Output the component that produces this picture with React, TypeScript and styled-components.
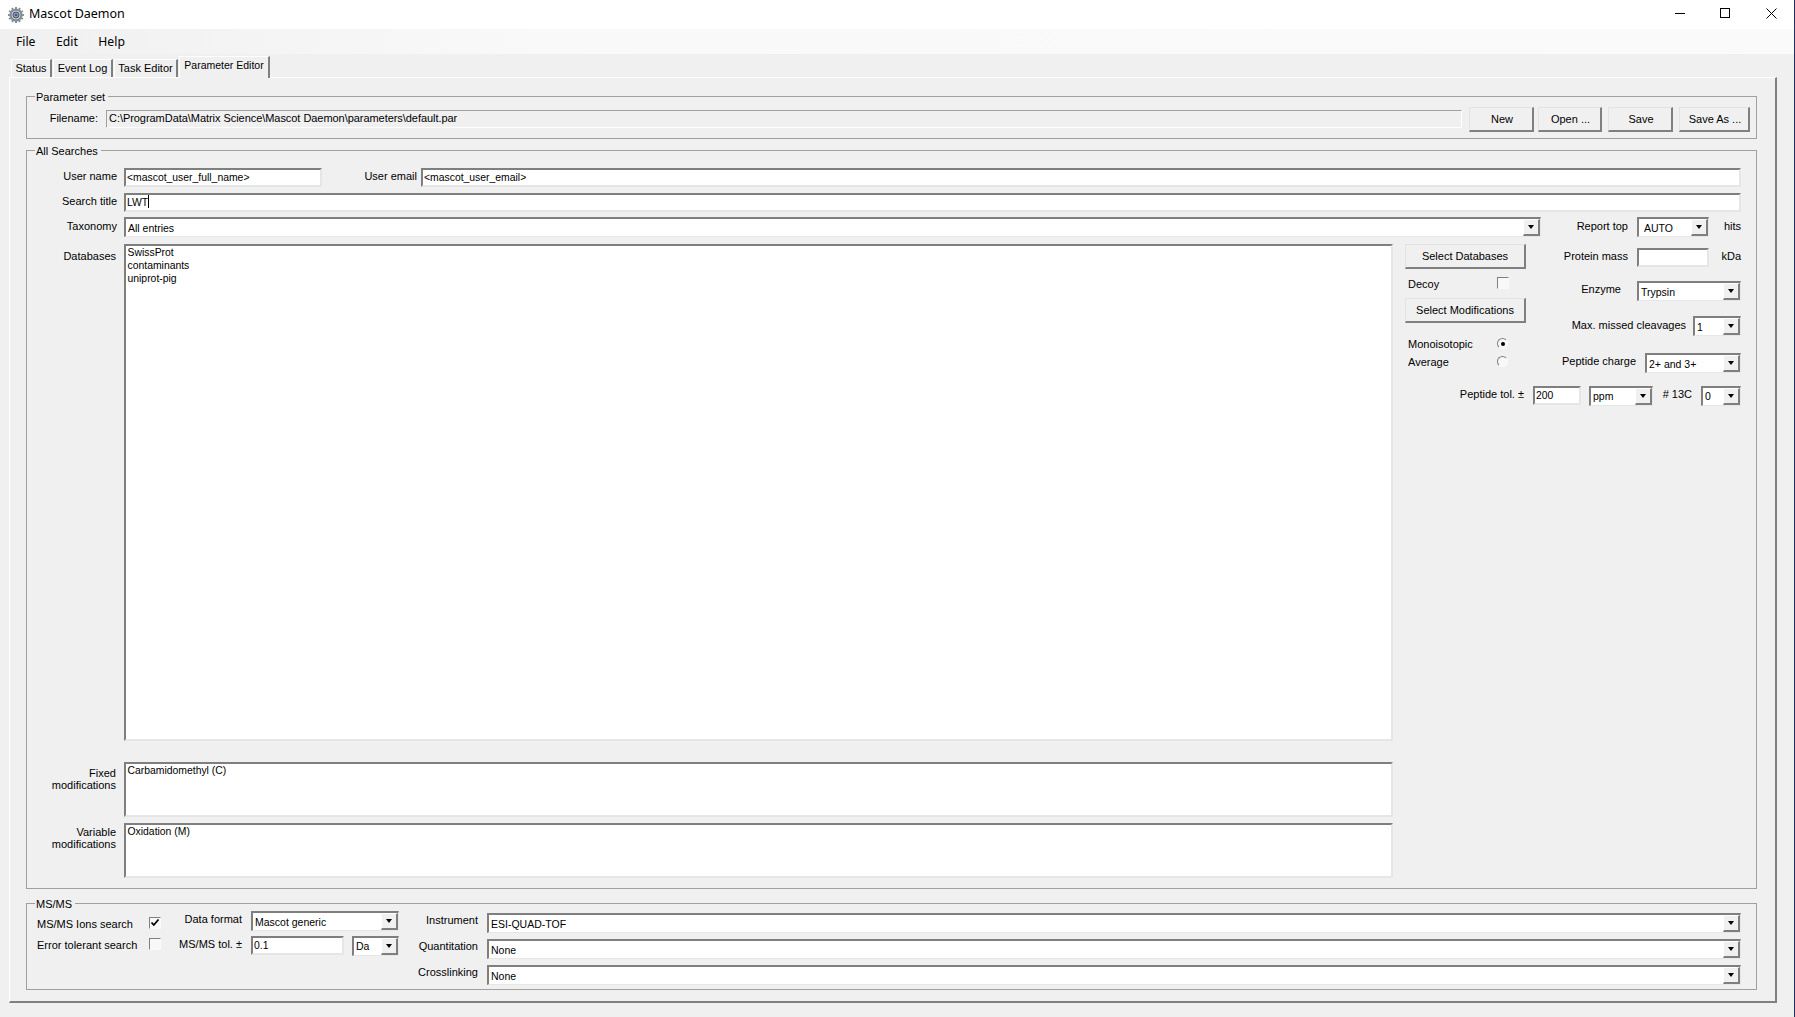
import React from "react";
import styled, { createGlobalStyle, css } from "styled-components";

const Global = createGlobalStyle`
  html, body { margin: 0; padding: 0; background: #f0f0f0; }
  body { font-family: "Liberation Sans", Arial, sans-serif; font-size: 11px; color: #000; }
  * { box-sizing: border-box; }
`;

const sunken = css`
  background: #fff;
  border-style: solid;
  border-width: 2px;
  border-color: #7f7f7f #e6e6e6 #e6e6e6 #7f7f7f;
`;

const Page = styled.div`
  width: 1795px;
  height: 1017px;
  display: flex;
  flex-direction: column;
  background: #f0f0f0;
  border-right: 1px solid #1d3160;
  overflow: hidden;
`;

const TitleBar = styled.header`
  height: 29px;
  flex: none;
  background: #fff;
  display: flex;
  align-items: center;
  padding-left: 8px;
  font-family: "Noto Sans", sans-serif;
  font-size: 12.5px;
`;
const AppName = styled.span`
  margin-left: 5px;
  flex: 1;
  padding-bottom: 2px;
`;
const WinControls = styled.div`
  display: flex;
  align-items: center;
  width: 122px;
  column-gap: 34px;
  padding: 0 0 2px 3px;
  svg:last-child { margin-left: 1px; }
`;
const MenuBar = styled.nav`
  height: 25px;
  flex: none;
  display: flex;
  align-items: center;
  gap: 20.5px;
  padding-left: 16px;
  font-family: "Noto Sans", sans-serif;
  font-size: 12.2px;
  background: linear-gradient(90deg, #f0f0f0 0%, #f9f9f9 30%, #fafafa 100%);
`;
const TabStrip = styled.div`
  height: 23px;
  flex: none;
  display: flex;
  align-items: flex-end;
  padding-left: 11px;
  gap: 1px;
  position: relative;
  z-index: 1;
`;
const Tab = styled.div<{ $w: number; $active?: boolean }>`
  width: ${(p) => p.$w}px;
  height: ${(p) => (p.$active ? 22 : 18)}px;
  display: flex;
  align-items: center;
  justify-content: center;
  background: #f0f0f0;
  border-style: solid;
  border-width: 1px 2px 0 1px;
  border-color: #fff #808080 #f0f0f0 #fff;
  margin-bottom: ${(p) => (p.$active ? -1 : 0)}px;
  padding-bottom: ${(p) => (p.$active ? 6 : 2)}px;
  font-size: ${(p) => (p.$active ? 10.5 : 11)}px;
`;
const Panel = styled.main`
  width: 1768px;
  height: 926px;
  margin-left: 9px;
  flex: none;
  border-style: solid;
  border-width: 1px 2px 2px 1px;
  border-color: #fff #808080 #808080 #fff;
  padding: 18px 18px 0 16px;
`;
const Group = styled.section<{ $mt?: number; $pt: number; $pb: number }>`
  position: relative;
  margin-top: ${(p) => p.$mt ?? 0}px;
  border: 1px solid #a0a0a0;
  padding-top: ${(p) => p.$pt}px;
  padding-bottom: ${(p) => p.$pb}px;
`;
const Legend = styled.span`
  position: absolute;
  left: 8px;
  top: -6px;
  background: #f0f0f0;
  padding: 0 3px 0 1px;
  line-height: 13px;
`;
const Row = styled.div<{ $mt?: number; $h: number; $end?: boolean; $pr?: number }>`
  display: flex;
  align-items: center;
  height: ${(p) => p.$h}px;
  margin-top: ${(p) => p.$mt ?? 0}px;
  padding-right: ${(p) => p.$pr ?? 0}px;
  justify-content: ${(p) => (p.$end ? "flex-end" : "flex-start")};
`;
const Label = styled.label<{ $w?: number; $gap?: number; $up?: number }>`
  flex: none;
  ${(p) => (p.$w ? `width: ${p.$w}px;` : "")}
  margin-right: ${(p) => p.$gap ?? 0}px;
  padding-bottom: ${(p) => p.$up ?? 2}px;
  text-align: right;
  white-space: nowrap;
  line-height: 13px;
`;
const ReadOnlyPath = styled.div`
  flex: 1;
  height: 18px;
  background: #f0f0f0;
  border: 1px solid;
  border-color: #a0a0a0 #fff #fff #a0a0a0;
  padding: 0 2px;
  line-height: 15px;
  letter-spacing: -0.05px;
`;
const Btn = styled.button<{ $w: number; $ml?: number; $mt?: number; $nudge?: number }>`
  flex: none;
  font: inherit;
  color: #000;
  width: ${(p) => p.$w}px;
  height: 25px;
  margin-left: ${(p) => p.$ml ?? 0}px;
  margin-top: ${(p) => p.$mt ?? 0}px;
  padding: 0 0 0 ${(p) => p.$nudge ?? 0}px;
  background: #f0f0f0;
  border-style: solid;
  border-width: 1px 2px 2px 1px;
  border-color: #e3e3e3 #808080 #808080 #e3e3e3;
`;
const TextBox = styled.div<{ $w?: number; $h?: number }>`
  ${sunken}
  ${(p) => (p.$w ? `width: ${p.$w}px; flex: none;` : "flex: 1;")}
  height: ${(p) => p.$h ?? 19}px;
  padding: 0 1px;
  line-height: 16px;
  font-size: 10.4px;
  white-space: nowrap;
`;
const Caret = styled.span`
  display: inline-block;
  width: 1px;
  height: 13px;
  background: #000;
  vertical-align: -2px;
`;
const SelectBox = styled.div<{ $w?: number; $ml?: number; $pl?: number }>`
  ${sunken}
  ${(p) => (p.$w ? `width: ${p.$w}px; flex: none;` : "flex: 1;")}
  margin-left: ${(p) => p.$ml ?? 0}px;
  height: 20px;
  display: flex;
  align-items: center;
  justify-content: space-between;
  padding-left: ${(p) => p.$pl ?? 2}px;
  border-right-width: 1px;
  border-bottom-width: 1px;
  font-size: 10.5px;
`;
const SelectArrow = styled.span`
  width: 17px;
  height: 17px;
  flex: none;
  display: flex;
  align-items: center;
  justify-content: center;
  background: #f0f0f0;
  border-style: solid;
  border-width: 1px 2px 2px 1px;
  border-color: #fff #7f7f7f #7f7f7f #fff;
  &::after {
    content: "";
    border-style: solid;
    border-width: 4px 3.5px 0;
    border-color: #000 transparent transparent;
  }
`;
const Select = ({ w, ml, pl, value }: { w?: number; ml?: number; pl?: number; value: string }) => (
  <SelectBox $w={w} $ml={ml} $pl={pl}>
    <span>{value}</span>
    <SelectArrow />
  </SelectBox>
);
const Body = styled.div`
  display: flex;
  margin-top: 7px;
`;
const ListColumn = styled.div`
  width: 1366px;
  flex: none;
  display: flex;
  flex-direction: column;
`;
const ListRow = styled.div<{ $h: number; $mt?: number }>`
  display: flex;
  height: ${(p) => p.$h}px;
  margin-top: ${(p) => p.$mt ?? 0}px;
`;
const ListLabel = styled.div<{ $pt: number }>`
  width: 89px;
  margin-right: 8px;
  padding-top: ${(p) => p.$pt}px;
  text-align: right;
  line-height: 12px;
  flex: none;
`;
const ListBox = styled.div`
  ${sunken}
  flex: 1;
  padding: 0 1px 0 1.5px;
  line-height: 13px;
  font-size: 10.4px;
`;
const RightSide = styled.div`
  flex: 1;
  display: flex;
  flex-direction: column;
  padding-right: 15px;
`;
const RightTop = styled.div`
  display: flex;
`;
const ButtonCol = styled.div`
  width: 133px;
  padding-left: 12px;
  flex: none;
  display: flex;
  flex-direction: column;
`;
const OptionRow = styled.div<{ $mt: number }>`
  display: flex;
  align-items: center;
  justify-content: space-between;
  height: 14px;
  margin-top: ${(p) => p.$mt}px;
  padding-left: 3px;
  width: 104px;
`;
const ParamCol = styled.div`
  flex: 1;
  display: flex;
  flex-direction: column;
`;
const Check = styled.span<{ $lift?: number }>`
  width: 12px;
  height: 12px;
  flex: none;
  display: inline-flex;
  align-items: center;
  justify-content: center;
  border: 1px solid;
  border-color: #7f7f7f #fafafa #fafafa #7f7f7f;
  background: #f8f8f8;
  margin-bottom: ${(p) => p.$lift ?? 0}px;
  svg { display: block; }
`;
const Radio = styled.span`
  width: 11px;
  height: 11px;
  flex: none;
  display: inline-flex;
  align-items: center;
  justify-content: center;
  border-radius: 50%;
  border: 1px solid;
  border-color: #7f7f7f #fafafa #fafafa #7f7f7f;
  background: #f8f8f8;
  margin: 0 1px 1px 0;
`;
const RadioDot = styled.span`
  width: 4px;
  height: 4px;
  border-radius: 50%;
  background: #000;
`;
const MsBody = styled.div`
  display: flex;
`;
const MsFlags = styled.div`
  width: 134px;
  flex: none;
  padding: 13px 0 0 10px;
`;
const FlagRow = styled.div<{ $mt?: number }>`
  display: flex;
  align-items: flex-start;
  justify-content: space-between;
  height: 14px;
  margin-top: ${(p) => p.$mt ?? 0}px;
`;
const FlagLabel = styled.span`
  padding-top: 1px;
  line-height: 13px;
  white-space: nowrap;
`;
const MsFormat = styled.div`
  width: 238px;
  flex: none;
  padding-top: 7px;
`;
const MsInstrument = styled.div`
  flex: 1;
  padding: 9px 15px 0 0;
`;

const teeth = [0, 30, 60, 90, 120, 150, 180, 210, 240, 270, 300, 330];
const GearIcon = () => (
  <svg width="16" height="16" viewBox="0 0 16 16">
    {teeth.map((a) => (
      <rect key={a} x="7" y="0" width="2" height="2.4" fill="#8a8f97" transform={`rotate(${a} 8 8)`} />
    ))}
    <circle cx="8" cy="8" r="6.6" fill="#8d939b" />
    <circle cx="8" cy="8" r="5" fill="#c9cfd6" stroke="#666e79" strokeWidth="0.8" />
    <circle cx="8" cy="8" r="3" fill="#8b99ab" stroke="#46556a" strokeWidth="1" />
    <circle cx="8" cy="8" r="1.1" fill="#2f4f7c" />
  </svg>
);
const TickIcon = () => (
  <svg width="10" height="10" viewBox="0 0 10 10">
    <path d="M1.5 4.5 L3.8 7 L8.5 1.5" fill="none" stroke="#000" strokeWidth="1.8" />
  </svg>
);
const MinIcon = () => (
  <svg width="11" height="11" viewBox="0 0 11 11"><path d="M0 5.5H10" stroke="#000" /></svg>
);
const MaxIcon = () => (
  <svg width="11" height="11" viewBox="0 0 11 11"><rect x="0.5" y="0.5" width="9" height="9" fill="none" stroke="#000" /></svg>
);
const CloseIcon = () => (
  <svg width="11" height="11" viewBox="0 0 11 11"><path d="M0.5 0.5L10.5 10.5M10.5 0.5L0.5 10.5" stroke="#000" /></svg>
);

export default function App() {
  return (
    <Page>
      <Global />
      <TitleBar>
        <GearIcon />
        <AppName>Mascot Daemon</AppName>
        <WinControls>
          <MinIcon />
          <MaxIcon />
          <CloseIcon />
        </WinControls>
      </TitleBar>
      <MenuBar>
        <span>File</span>
        <span>Edit</span>
        <span>Help</span>
      </MenuBar>
      <TabStrip>
        <Tab $w={41}>Status</Tab>
        <Tab $w={60}>Event Log</Tab>
        <Tab $w={64}>Task Editor</Tab>
        <Tab $w={91} $active>Parameter Editor</Tab>
      </TabStrip>
      <Panel>
        <Group $pt={10} $pb={7}>
          <Legend>Parameter set</Legend>
          <Row $h={24} $pr={6}>
            <Label $w={71} $gap={8}>Filename:</Label>
            <ReadOnlyPath>C:\ProgramData\Matrix Science\Mascot Daemon\parameters\default.par</ReadOnlyPath>
            <Btn $w={65} $ml={7} $nudge={2}>New</Btn>
            <Btn $w={64} $ml={4} $nudge={2}>Open ...</Btn>
            <Btn $w={65} $ml={6} $nudge={2}>Save</Btn>
            <Btn $w={71} $ml={6} $nudge={2}>Save As ...</Btn>
          </Row>
        </Group>

        <Group $mt={11} $pt={17} $pb={10}>
          <Legend>All Searches</Legend>
          <Row $h={19} $pr={15}>
            <Label $w={90} $gap={7}>User name</Label>
            <TextBox $w={198}>&lt;mascot_user_full_name&gt;</TextBox>
            <Label $w={95} $gap={4}>User email</Label>
            <TextBox>&lt;mascot_user_email&gt;</TextBox>
          </Row>
          <Row $h={19} $mt={6} $pr={15}>
            <Label $w={90} $gap={7}>Search title</Label>
            <TextBox>LWT<Caret /></TextBox>
          </Row>
          <Row $h={20} $mt={5} $pr={15}>
            <Label $w={90} $gap={7}>Taxonomy</Label>
            <Select w={1417} value="All entries" />
            <Label $w={87} $gap={9}>Report top</Label>
            <Select w={72} pl={5} value="AUTO" />
            <Label $w={32}>hits</Label>
          </Row>
          <Body>
            <ListColumn>
              <ListRow $h={497}>
                <ListLabel $pt={6}>Databases</ListLabel>
                <ListBox>SwissProt<br />contaminants<br />uniprot-pig</ListBox>
              </ListRow>
              <ListRow $h={55} $mt={21}>
                <ListLabel $pt={5}>Fixed<br />modifications</ListLabel>
                <ListBox>Carbamidomethyl (C)</ListBox>
              </ListRow>
              <ListRow $h={55} $mt={6}>
                <ListLabel $pt={3}>Variable<br />modifications</ListLabel>
                <ListBox>Oxidation (M)</ListBox>
              </ListRow>
            </ListColumn>
            <RightSide>
              <RightTop>
                <ButtonCol>
                  <Btn $w={121}>Select Databases</Btn>
                  <OptionRow $mt={8}><span>Decoy</span><Check $lift={2} /></OptionRow>
                  <Btn $w={121} $mt={7}>Select Modifications</Btn>
                  <OptionRow $mt={14}><span>Monoisotopic</span><Radio><RadioDot /></Radio></OptionRow>
                  <OptionRow $mt={4}><span>Average</span><Radio /></OptionRow>
                </ButtonCol>
                <ParamCol>
                  <Row $h={19} $mt={4} $end>
                    <Label $gap={9}>Protein mass</Label>
                    <TextBox $w={72} />
                    <Label $w={32}>kDa</Label>
                  </Row>
                  <Row $h={20} $mt={14} $end>
                    <Label $gap={16} $up={3}>Enzyme</Label>
                    <Select w={104} value="Trypsin" />
                  </Row>
                  <Row $h={20} $mt={15} $end>
                    <Label $gap={7}>Max. missed cleavages</Label>
                    <Select w={48} value="1" />
                  </Row>
                  <Row $h={20} $mt={17} $end>
                    <Label $gap={9} $up={3}>Peptide charge</Label>
                    <Select w={96} value="2+ and 3+" />
                  </Row>
                </ParamCol>
              </RightTop>
              <Row $h={19} $mt={13} $end>
                <Label $gap={9} $up={3}>Peptide tol. ±</Label>
                <TextBox $w={48}>200</TextBox>
                <Select w={64} ml={8} value="ppm" />
                <Label $w={39} $gap={9} $up={3}># 13C</Label>
                <Select w={40} value="0" />
              </Row>
            </RightSide>
          </Body>
        </Group>

        <Group $mt={14} $pt={0} $pb={4}>
          <Legend>MS/MS</Legend>
          <MsBody>
            <MsFlags>
              <FlagRow><FlagLabel>MS/MS Ions search</FlagLabel><Check><TickIcon /></Check></FlagRow>
              <FlagRow $mt={7}><FlagLabel>Error tolerant search</FlagLabel><Check /></FlagRow>
            </MsFlags>
            <MsFormat>
              <Row $h={20}>
                <Label $w={81} $gap={9} $up={4}>Data format</Label>
                <Select w={148} value="Mascot generic" />
              </Row>
              <Row $h={19} $mt={5}>
                <Label $w={81} $gap={9} $up={3}>MS/MS tol. ±</Label>
                <TextBox $w={93}>0.1</TextBox>
                <Select w={47} ml={8} value="Da" />
              </Row>
            </MsFormat>
            <MsInstrument>
              <Row $h={20}>
                <Label $w={79} $gap={9} $up={6}>Instrument</Label>
                <Select value="ESI-QUAD-TOF" />
              </Row>
              <Row $h={20} $mt={6}>
                <Label $w={79} $gap={9} $up={6}>Quantitation</Label>
                <Select value="None" />
              </Row>
              <Row $h={20} $mt={6}>
                <Label $w={79} $gap={9} $up={6}>Crosslinking</Label>
                <Select value="None" />
              </Row>
            </MsInstrument>
          </MsBody>
        </Group>
      </Panel>
    </Page>
  );
}
